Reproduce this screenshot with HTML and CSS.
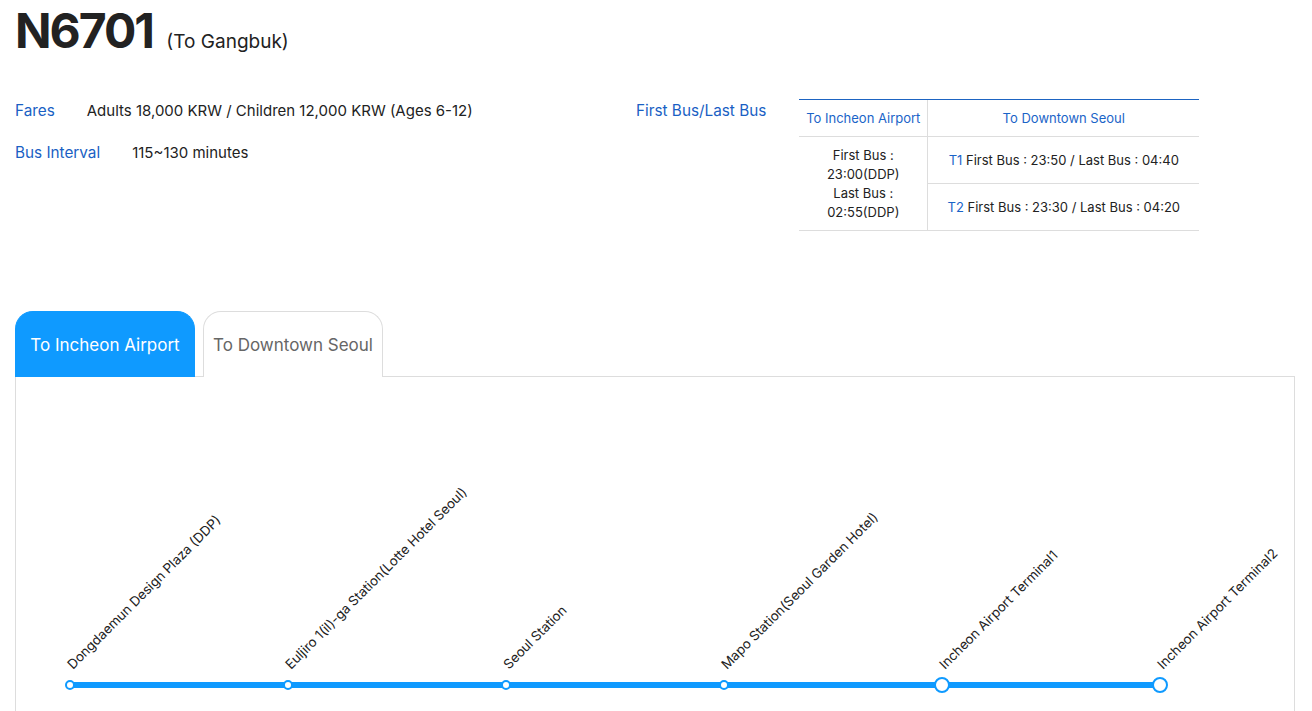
FILE: index.html
```html
<!DOCTYPE html>
<html lang="en">
<head>
    <meta charset="UTF-8">
    <meta name="viewport" content="width=device-width, initial-scale=1.0">
    <title>N6701 (To Gangbuk)</title>
    <link rel="stylesheet" href="styles.css">
</head>
<body>
    <div class="container">
        <h1 class="title">N6701 <span class="title-sub">(To Gangbuk)</span></h1>

        <div class="info">
            <div class="info-left">
                <div class="info-row">
                    <span class="info-label">Fares</span>
                    <span class="info-value">Adults 18,000 KRW / Children 12,000 KRW (Ages 6-12)</span>
                </div>
                <div class="info-row">
                    <span class="info-label">Bus Interval</span>
                    <span class="info-value">115~130 minutes</span>
                </div>
            </div>

            <div class="info-right">
                <span class="info-label">First Bus/Last Bus</span>
                <table class="time-table">
                    <thead>
                        <tr>
                            <th class="col-airport">To Incheon Airport</th>
                            <th class="col-downtown">To Downtown Seoul</th>
                        </tr>
                    </thead>
                    <tbody>
                        <tr>
                            <td rowspan="2" class="cell-multi">First Bus :<br>23:00(DDP)<br>Last Bus :<br>02:55(DDP)</td>
                            <td class="cell-row"><span class="term">T1</span> First Bus : 23:50 / Last Bus : 04:40</td>
                        </tr>
                        <tr>
                            <td class="cell-row"><span class="term">T2</span> First Bus : 23:30 / Last Bus : 04:20</td>
                        </tr>
                    </tbody>
                </table>
            </div>
        </div>

        <div class="tabs">
            <button class="tab active">To Incheon Airport</button>
            <button class="tab">To Downtown Seoul</button>
        </div>

        <div class="tab-panel">
            <div class="route-line">
                <div class="stop">
                    <span class="stop-dot"></span>
                    <span class="stop-name">Dongdaemun Design Plaza (DDP)</span>
                </div>
                <div class="stop">
                    <span class="stop-dot"></span>
                    <span class="stop-name">Euljiro 1(il)-ga Station(Lotte Hotel Seoul)</span>
                </div>
                <div class="stop">
                    <span class="stop-dot"></span>
                    <span class="stop-name">Seoul Station</span>
                </div>
                <div class="stop">
                    <span class="stop-dot"></span>
                    <span class="stop-name">Mapo Station(Seoul Garden Hotel)</span>
                </div>
                <div class="stop">
                    <span class="stop-dot big"></span>
                    <span class="stop-name">Incheon Airport Terminal1</span>
                </div>
                <div class="stop">
                    <span class="stop-dot big"></span>
                    <span class="stop-name">Incheon Airport Terminal2</span>
                </div>
            </div>
        </div>
    </div>
</body>
</html>
```

FILE: styles.css
```css
* {
    margin: 0;
    padding: 0;
    box-sizing: border-box;
}

body {
    font-family: Inter, "Noto Sans", sans-serif;
    color: #222;
    background: #fff;
    overflow: hidden;
}

.container {
    width: 1280px;
    margin-left: 15px;
    padding-top: 7px;
}

/* header */
.title {
    font-size: 48px;
    line-height: 48px;
    font-weight: 700;
    letter-spacing: -2px;
}

.title-sub {
    font-size: 19px;
    font-weight: 400;
    margin-left: 4px;
    letter-spacing: 0;
}

/* info block */
.info {
    display: flex;
    margin-top: 33px;
}

.info-left {
    width: 621px;
}

.info-row {
    display: flex;
    gap: 32px;
    font-size: 15px;
    line-height: 20px;
    padding-top: 2px;
    margin-bottom: 20px;
}

.info-label {
    color: #1a5fc4;
    font-size: 15.3px;
    line-height: 20px;
}

.info-right {
    display: flex;
    gap: 33px;
    align-items: flex-start;
    padding-top: 2px;
}

.time-table {
    width: 400px;
    margin-top: -2px;
    border-collapse: separate;
    border-spacing: 0;
    border-top: 1px solid #1d64c2;
    font-size: 13px;
    line-height: 19px;
    text-align: center;
}

.time-table th {
    height: 37px;
    font-weight: 400;
    color: #1a64c8;
    border-bottom: 1px solid #ddd;
}

.col-airport {
    width: 129px;
    border-right: 1px solid #ddd;
}

.time-table td {
    border-bottom: 1px solid #ddd;
}

.cell-multi {
    border-right: 1px solid #ddd;
    padding: 8px 4px;
}

.cell-row {
    height: 47px;
}

.term {
    color: #1a64c8;
}

/* tabs */
.tabs {
    display: flex;
    gap: 8px;
    margin-top: 80px;
    position: relative;
    z-index: 1;
    margin-bottom: -1px;
}

.tab {
    width: 180px;
    height: 66px;
    font-family: Inter, "Noto Sans", sans-serif;
    font-size: 17px;
    color: #666;
    background: #fff;
    border: 1px solid #ddd;
    border-bottom: none;
    border-radius: 18px 18px 0 0;
    cursor: pointer;
}

.tab.active {
    background: #0f9aff;
    border-color: #0f9aff;
    color: #fff;
}

.tab-panel {
    border: 1px solid #ddd;
    height: 400px;
    padding-top: 305px;
}

/* route diagram */
.route-line {
    display: flex;
    justify-content: space-between;
    height: 6px;
    margin-left: 54px;
    width: 1090px;
    background: #0f9aff;
}

.stop {
    position: relative;
    width: 0;
}

.stop-dot {
    position: absolute;
    left: -5px;
    top: -2px;
    width: 10px;
    height: 10px;
    border-radius: 50%;
    background: #fff;
    border: 2px solid #0f9aff;
}

.stop-dot.big {
    left: -8px;
    top: -5px;
    width: 16px;
    height: 16px;
}

.stop-name {
    position: absolute;
    left: 5px;
    bottom: 16px;
    transform-origin: left bottom;
    transform: rotate(-45deg);
    white-space: nowrap;
    font-size: 13.3px;
    line-height: 16px;
    color: #222;
}
```
